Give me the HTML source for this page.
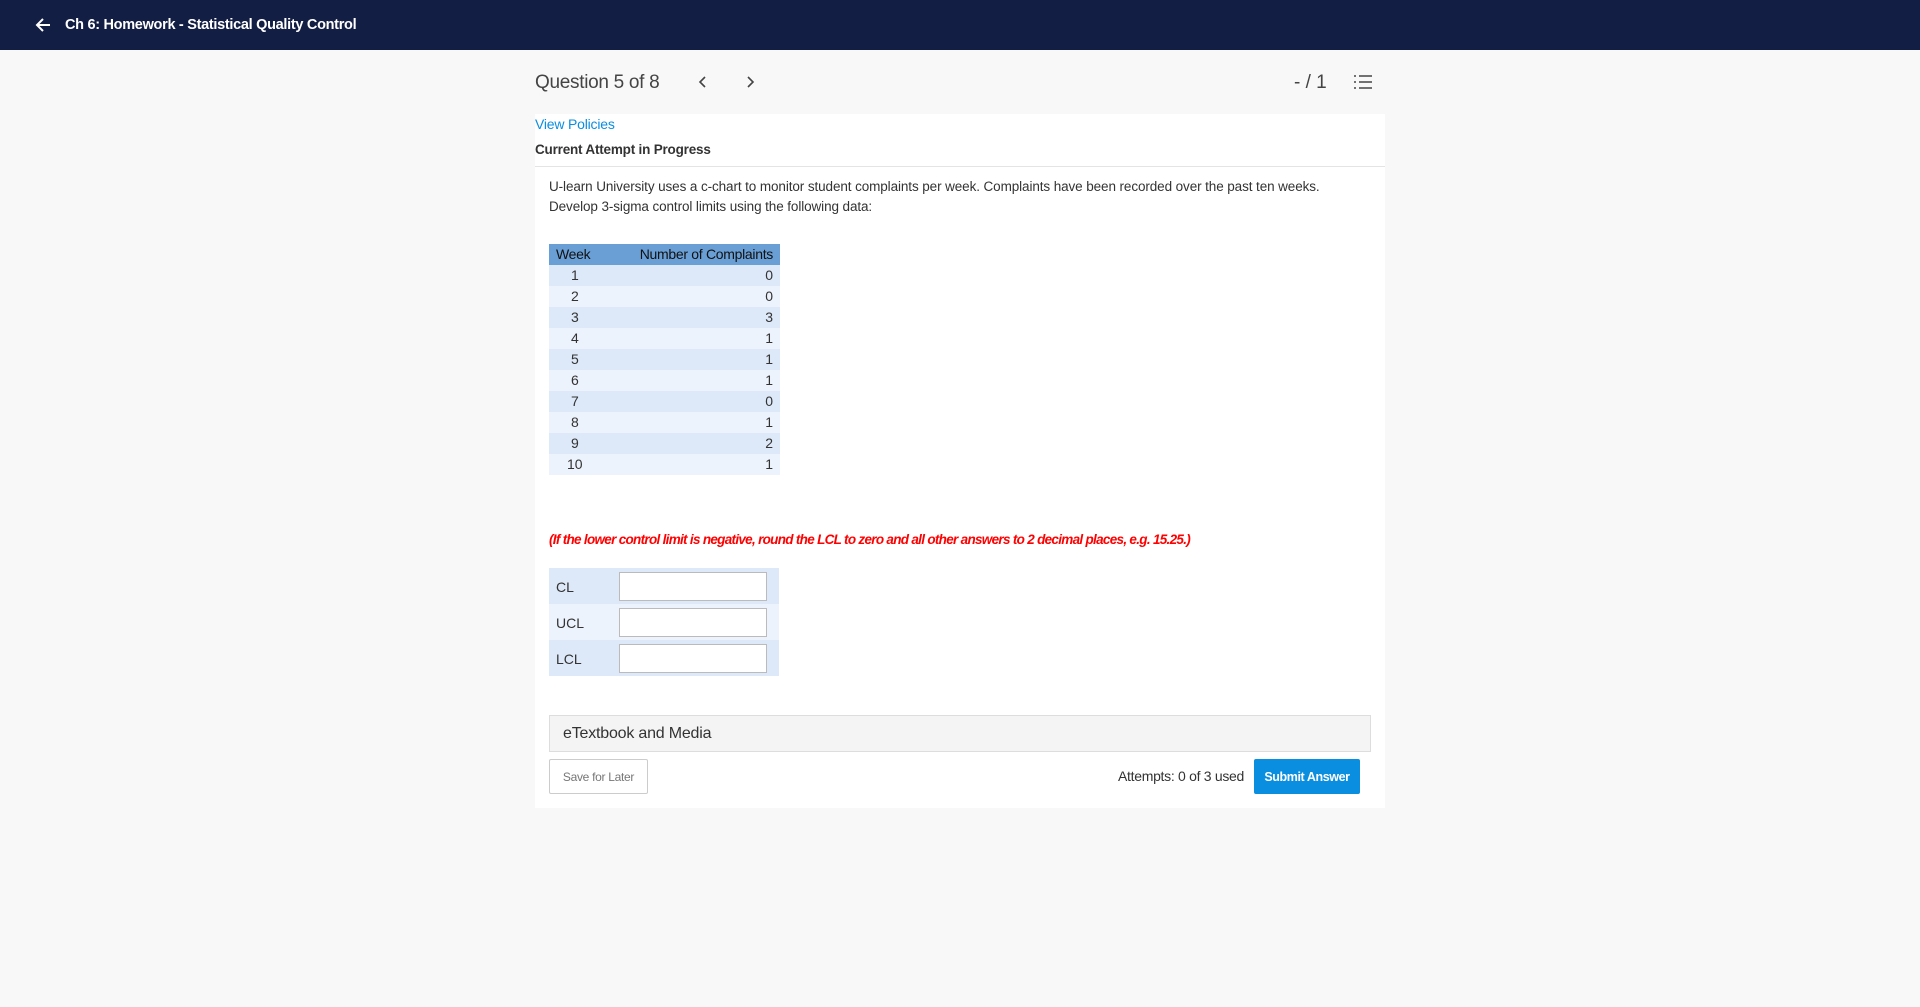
<!DOCTYPE html>
<html><head><meta charset="utf-8"><style>
*{box-sizing:border-box;margin:0;padding:0}
body{width:1920px;height:1007px;background:#f8f8f8;font-family:"Liberation Sans",sans-serif;color:#333;position:relative;overflow:hidden}
.abs{position:absolute}
.hdr{left:0;top:0;width:1920px;height:50px;background:#131e44;color:#fff}
.card{left:535px;top:114px;width:850px;height:694px;background:#fff}
table.d{border-collapse:collapse;font-size:14px;color:#333}
table.d td,table.d th{height:21px;padding:0 7px;line-height:21px}
table.d th{background:#6a9fd6;color:#111;font-weight:normal;letter-spacing:-0.3px}
.r1{background:#dde8f8}.r2{background:#edf3fd}
.in{position:absolute;left:70px;width:148px;height:29px;border:1px solid #bbb;background:#fff}
</style></head><body>
<div class="abs hdr">
<svg class="abs" style="left:34px;top:16px" width="18" height="18" viewBox="0 0 18 18"><path d="M16 9H3M9 3L3 9l6 6" stroke="#fff" stroke-width="2" fill="none"/></svg>
<div class="abs" style="left:65px;top:17px;font-size:14.5px;font-weight:bold;letter-spacing:-0.3px">Ch 6: Homework - Statistical Quality Control</div>
</div>
<div class="abs" style="left:535px;top:72px;font-size:19px;color:#444;letter-spacing:-0.3px">Question 5 of 8</div>
<svg class="abs" style="left:698px;top:75px" width="10" height="14"><path d="M7 2L2 7l5 5" stroke="#444" stroke-width="1.6" fill="none"/></svg>
<svg class="abs" style="left:745px;top:75px" width="10" height="14"><path d="M3 2l5 5-5 5" stroke="#444" stroke-width="1.6" fill="none"/></svg>
<div class="abs" style="left:1294px;top:72px;font-size:19px;color:#444">- / 1</div>
<svg class="abs" style="left:1353px;top:74px" width="20" height="16"><g stroke="#444" stroke-width="1.5"><path d="M6 2h13M6 8h13M6 14h13"/><path d="M1 2h2M1 8h2M1 14h2"/></g></svg>
<div class="abs card">
<div class="abs" style="left:0;top:2px;font-size:14px;color:#0a8ee0;letter-spacing:-0.2px">View Policies</div>
<div class="abs" style="left:0;top:28px;font-size:13.5px;font-weight:bold;color:#333;letter-spacing:-0.2px">Current Attempt in Progress</div>
<div class="abs" style="left:0;top:52px;width:850px;height:1px;background:#e4e4e4"></div>
<div class="abs" style="left:14px;top:63px;font-size:13.5px;line-height:20px;color:#333;letter-spacing:-0.1px">U-learn University uses a c-chart to monitor student complaints per week. Complaints have been recorded over the past ten weeks.<br>Develop 3-sigma control limits using the following data:</div>
<table class="d abs" style="left:14px;top:130px;width:231px">
<tr><th style="text-align:left">Week</th><th style="text-align:right">Number of Complaints</th></tr>
<tr class="r1"><td style="padding-left:22px">1</td><td align="right">0</td></tr>
<tr class="r2"><td style="padding-left:22px">2</td><td align="right">0</td></tr>
<tr class="r1"><td style="padding-left:22px">3</td><td align="right">3</td></tr>
<tr class="r2"><td style="padding-left:22px">4</td><td align="right">1</td></tr>
<tr class="r1"><td style="padding-left:22px">5</td><td align="right">1</td></tr>
<tr class="r2"><td style="padding-left:22px">6</td><td align="right">1</td></tr>
<tr class="r1"><td style="padding-left:22px">7</td><td align="right">0</td></tr>
<tr class="r2"><td style="padding-left:22px">8</td><td align="right">1</td></tr>
<tr class="r1"><td style="padding-left:22px">9</td><td align="right">2</td></tr>
<tr class="r2"><td style="padding-left:18px">10</td><td align="right">1</td></tr>
</table>
<div class="abs" style="left:14px;top:418px;font-size:13.5px;font-style:italic;font-weight:bold;color:#f00;letter-spacing:-0.7px">(If the lower control limit is negative, round the LCL to zero and all other answers to 2 decimal places, e.g. 15.25.)</div>
<div class="abs" style="left:14px;top:454px;width:230px;height:108px">
<div class="abs r1" style="left:0;top:0;width:230px;height:36px"></div>
<div class="abs r2" style="left:0;top:36px;width:230px;height:36px"></div>
<div class="abs r1" style="left:0;top:72px;width:230px;height:36px"></div>
<div class="abs" style="left:7px;top:11px;font-size:14px">CL</div>
<div class="abs" style="left:7px;top:47px;font-size:14px">UCL</div>
<div class="abs" style="left:7px;top:83px;font-size:14px">LCL</div>
<div class="in" style="top:4px"></div><div class="in" style="top:40px"></div><div class="in" style="top:76px"></div>
</div>
<div class="abs" style="left:14px;top:601px;width:822px;height:37px;background:#f4f4f4;border:1px solid #ddd"></div>
<div class="abs" style="left:28px;top:611px;font-size:16px;color:#333;letter-spacing:-0.2px">eTextbook and Media</div>
<div class="abs" style="left:14px;top:645px;width:99px;height:35px;border:1px solid #ccc;border-radius:2px;font-size:12px;color:#777;text-align:center;line-height:35px;letter-spacing:-0.3px">Save for Later</div>
<div class="abs" style="left:572px;top:654px;font-size:14px;color:#333;width:137px;text-align:right;letter-spacing:-0.3px">Attempts: 0 of 3 used</div>
<div class="abs" style="left:719px;top:645px;width:106px;height:35px;background:#0a8ee0;border-radius:2px;font-size:12.5px;color:#fff;text-align:center;line-height:36px;font-weight:bold;letter-spacing:-0.4px">Submit Answer</div>
</div>
</body></html>
